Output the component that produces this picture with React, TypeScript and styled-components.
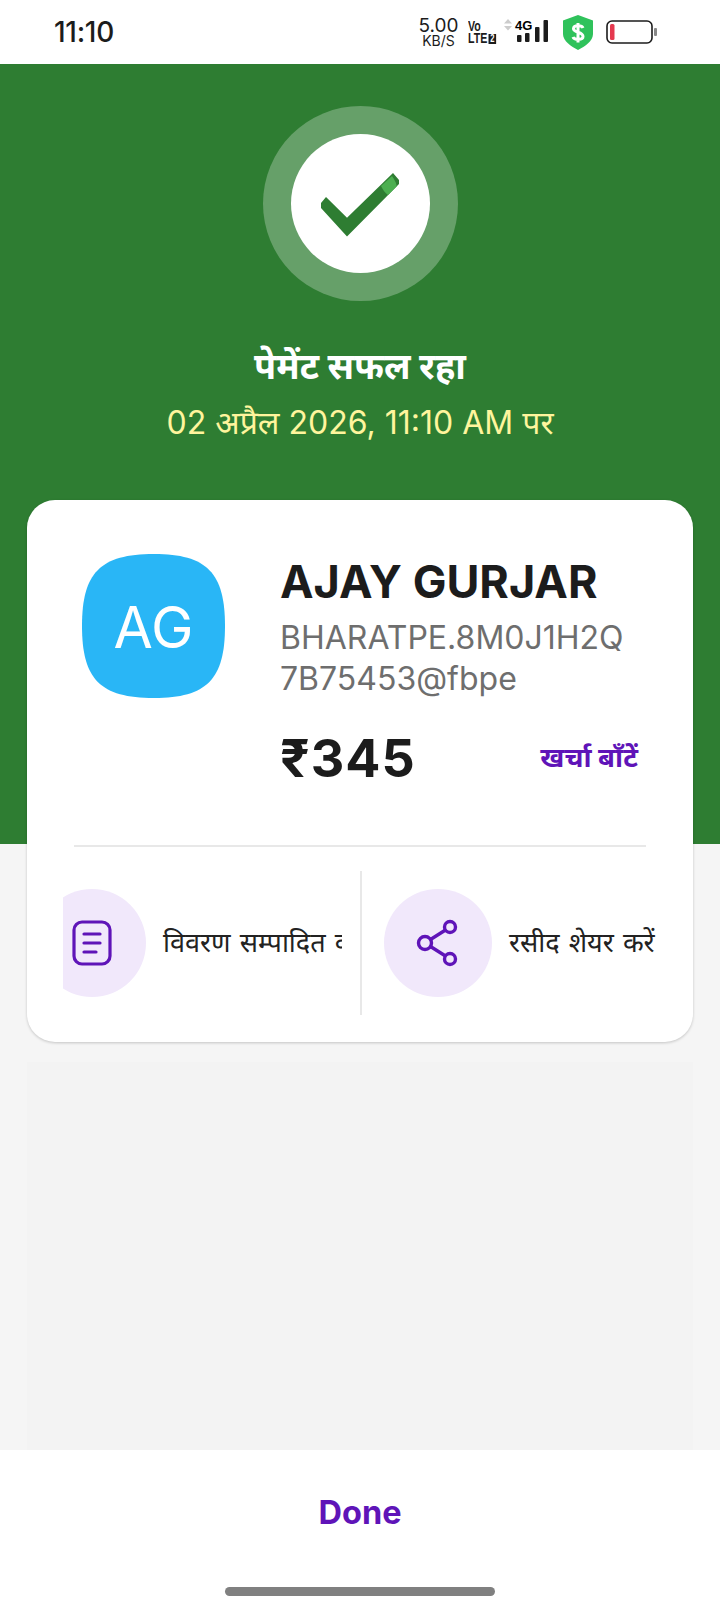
import React from 'react';
import styled, {createGlobalStyle} from 'styled-components';

const GlobalStyle = createGlobalStyle`
    html, body {
        margin: 0;
        padding: 0;
        background: #f5f5f5;
    }
    * {
        box-sizing: border-box;
    }
`

const Page = styled.div`
    width: 720px;
    height: 1612px;
    display: flex;
    flex-direction: column;
    overflow: hidden;
    background: #f5f5f5;
    font-family: Inter, "Noto Sans", sans-serif;
`

const StatusBar = styled.div`
    height: 64px;
    flex: none;
    background: #fff;
    display: flex;
    align-items: center;
    justify-content: space-between;
    padding: 0 63px 0 54px;
    color: #1c1c1c;
`

const Clock = styled.div`
    font-size: 28px;
    font-weight: 500;
    letter-spacing: -0.3px;
`

const StatusIcons = styled.div`
    display: flex;
    align-items: center;
`

const NetSpeed = styled.div`
    display: flex;
    flex-direction: column;
    align-items: center;
    width: 37px;
    margin-right: 11px;
    font-size: 19px;
    line-height: 15px;

    span + span {
        font-size: 14px;
        line-height: 13px;
        margin-top: 1px;
    }
`

const VoLte = styled.div`
    width: 26px;
    margin-right: 10px;
    font-family: "Liberation Sans", sans-serif;
    font-size: 14px;
    font-weight: 700;
    line-height: 12px;
    white-space: nowrap;
    transform: scaleX(0.76);
    transform-origin: left;

    b {
        display: inline-block;
        margin-left: 2px;
        padding: 0 2px;
        background: #1c1c1c;
        color: #fff;
        font-size: 10px;
        line-height: 10px;
        vertical-align: 1px;
    }
`

const Signal = styled.svg`
    display: block;
    margin-right: 15px;
    overflow: visible;

    text {
        font-family: "Liberation Sans", sans-serif;
        font-size: 13px;
        font-weight: 700;
    }
`

const Shield = styled.svg`
    display: block;
    margin-right: 13px;
`

const Hero = styled.div`
    height: 780px;
    flex: none;
    background: #2e7d32;
    display: flex;
    flex-direction: column;
    align-items: center;
    padding-top: 42px;
`

const Halo = styled.div`
    width: 195px;
    height: 195px;
    border-radius: 50%;
    background: rgba(255, 255, 255, 0.27);
    display: flex;
    align-items: center;
    justify-content: center;
`

const Disc = styled.div`
    width: 139px;
    height: 139px;
    border-radius: 50%;
    background: #fff;
    display: flex;
    align-items: center;
    justify-content: center;
`

const Title = styled.div`
    margin-top: 43px;
    color: #fff;
    font-size: 36px;
    line-height: 44px;
    font-weight: 700;
`

const Stamp = styled.div`
    margin-top: 13px;
    color: #fff59d;
    font-size: 32px;
    line-height: 44px;
`

const Card = styled.div`
    margin: -344px 27px 0;
    height: 542px;
    flex: none;
    background: #fff;
    border-radius: 28px;
    box-shadow: 0 1px 3px rgba(0, 0, 0, 0.2);
    position: relative;
    display: flex;
    flex-direction: column;
`

const Payee = styled.div`
    height: 345px;
    flex: none;
    display: flex;
    padding: 54px 53px 0 55px;
    gap: 55px;
`

const Avatar = styled.div`
    width: 143px;
    height: 144px;
    flex: none;
    padding-top: 2px;
    background: #29b6f6;
    color: #fff;
    font-size: 57px;
    display: flex;
    align-items: center;
    justify-content: center;
    clip-path: path("M72 0C125 0 143 19 143 72C143 125 125 144 72 144C18 144 0 125 0 72C0 19 18 0 72 0Z");
`

const Details = styled.div`
    flex: 1;
    min-width: 0;
`

const Name = styled.div`
    font-size: 45px;
    line-height: 56px;
    font-weight: 700;
    color: #1c1c1c;
`

const Vpa = styled.div`
    margin-top: 7px;
    font-size: 32px;
    line-height: 41px;
    color: #6e6e6e;
    word-break: break-all;
`

const AmountRow = styled.div`
    margin-top: 28px;
    display: flex;
    align-items: center;
    justify-content: space-between;
`

const Amount = styled.div`
    font-size: 52px;
    line-height: 64px;
    font-weight: 700;
    color: #1c1c1c;
    letter-spacing: 1px;
`

const SplitLink = styled.div`
    padding: 0 2px 6px 0;
    font-size: 27.5px;
    font-weight: 700;
    color: #5f14b8;
`

const Rule = styled.div`
    margin: 0 47px;
    height: 2px;
    flex: none;
    background: #e8e8e8;
`

const Actions = styled.div`
    margin-top: 24px;
    height: 144px;
    display: flex;
    padding-left: 36px;
`

const Action = styled.div<{$width: number; $shift: number}>`
    width: ${({$width}) => $width}px;
    flex: none;
    display: flex;
    align-items: center;
    gap: 17px;
    overflow: hidden;
    padding-left: ${({$shift}) => Math.max($shift, 0)}px;
    white-space: nowrap;
    font-size: 27px;
    word-spacing: 1.5px;
    color: #222;

    & > div:first-child {
        margin-left: ${({$shift}) => Math.min($shift, 0)}px;
    }
`

const ActionLabel = styled.div`
    padding-bottom: 4px;
`

const Divider = styled.div`
    width: 2px;
    flex: none;
    margin-left: 18px;
    background: #e8e8e8;
`

const IconDisc = styled.div`
    width: 108px;
    height: 108px;
    flex: none;
    border-radius: 50%;
    background: #f1e8fb;
    display: flex;
    align-items: center;
    justify-content: center;
`

const Blank = styled.div`
    flex: 1;
    margin: 20px 27px 0;
    background: #f3f3f3;
`

const Footer = styled.div`
    height: 162px;
    flex: none;
    background: #fff;
    display: flex;
    flex-direction: column;
    align-items: center;
`

const Done = styled.div`
    margin-top: 42px;
    font-size: 32.5px;
    line-height: 42px;
    font-weight: 700;
    color: #5f14b8;
`

const HomeBar = styled.div`
    margin-top: 53px;
    width: 270px;
    height: 9px;
    border-radius: 5px;
    background: #808080;
`

const Battery: React.FC = () => (
    <svg width="51" height="24" viewBox="0 0 51 24">
        <rect x="1" y="1" width="45" height="22" rx="5" fill="none" stroke="#1c1c1c" strokeWidth="1.6"/>
        <rect x="4" y="4" width="4.500" height="16" rx="1.500" fill="#e5394f"/>
        <rect x="48" y="8" width="3" height="8" rx="1" fill="#888"/>
    </svg>
)

const Check: React.FC = () => (
    <svg width="80" height="66" viewBox="0 0 80 66">
        <path d="M6 26L1 32V37L27 65.500L79 13V9L73 2L27 46.700Z" fill="#2e7d32"/>
        <path d="M72 5L61 15C63 19 65 22 68 24L76.500 15.500C77 13 74 8 72 5Z" fill="#4caf50"/>
    </svg>
)

const App: React.FC = () => {
    return (
        <Page>
            <GlobalStyle/>
            <StatusBar>
                <Clock>11:10</Clock>
                <StatusIcons>
                    <NetSpeed><span>5.00</span><span>KB/S</span></NetSpeed>
                    <VoLte>Vo<br/>LTE<b>2</b></VoLte>
                    <Signal width="44" height="24" viewBox="0 0 44 24">
                        <path d="M0 3.500L4 -1L8 3.500ZM0 6L4 10.500L8 6Z" fill="#ccc"/>
                        <text x="11" y="10">4G</text>
                        <rect x="13" y="15" width="4.500" height="7" rx="1" fill="#1c1c1c"/>
                        <rect x="21" y="13" width="4.500" height="9" rx="1" fill="#1c1c1c"/>
                        <rect x="31" y="7" width="4.500" height="15" rx="1" fill="#1c1c1c"/>
                        <rect x="39.500" y="0" width="4.500" height="22" rx="1" fill="#1c1c1c"/>
                    </Signal>
                    <Shield width="30" height="35" viewBox="0 0 30 35">
                        <path d="M15 0L30 5.500V19C30 26 22 31.500 15 35C8 31.500 0 26 0 19V5.500Z" fill="#2fc25b"/>
                        <path d="M20 13C19 10.500 11 9.500 10.500 13.500C10 18 20 16.500 20 21.500C20 25.500 11 25 10 22M15 8V27.500" fill="none" stroke="#fff" strokeWidth="3"/>
                    </Shield>
                    <Battery/>
                </StatusIcons>
            </StatusBar>
            <Hero>
                <Halo>
                    <Disc><Check/></Disc>
                </Halo>
                <Title>पेमेंट सफल रहा</Title>
                <Stamp>02 अप्रैल 2026, 11:10 AM पर</Stamp>
            </Hero>
            <Card>
                <Payee>
                    <Avatar>AG</Avatar>
                    <Details>
                        <Name>AJAY GURJAR</Name>
                        <Vpa>BHARATPE.8M0J1H2Q7B75453@fbpe</Vpa>
                        <AmountRow>
                            <Amount>₹345</Amount>
                            <SplitLink>खर्चा बाँटें</SplitLink>
                        </AmountRow>
                    </Details>
                </Payee>
                <Rule/>
                <Actions>
                    <Action $width={279} $shift={-25}>
                        <IconDisc>
                            <svg width="42" height="48" viewBox="0 0 42 48" fill="none" stroke="#5f14b8" strokeWidth="3.200" strokeLinecap="round">
                                <rect x="3" y="3" width="36" height="42" rx="8"/>
                                <path d="M13 15H29M13 24H29M13 33H25"/>
                            </svg>
                        </IconDisc>
                        <ActionLabel>विवरण सम्पादित करें</ActionLabel>
                    </Action>
                    <Divider/>
                    <Action $width={300} $shift={22}>
                        <IconDisc>
                            <svg width="44" height="48" viewBox="0 0 44 48" fill="none" stroke="#5f14b8" strokeWidth="3.400">
                                <circle cx="34" cy="8" r="5.500"/>
                                <circle cx="9" cy="24" r="6.500"/>
                                <circle cx="34" cy="40" r="5.500"/>
                                <path d="M14.500 20.500L29.500 11M14.500 27.500L29.500 37"/>
                            </svg>
                        </IconDisc>
                        <ActionLabel>रसीद शेयर करें</ActionLabel>
                    </Action>
                </Actions>
            </Card>
            <Blank/>
            <Footer>
                <Done>Done</Done>
                <HomeBar/>
            </Footer>
        </Page>
    )
};

export default App;
